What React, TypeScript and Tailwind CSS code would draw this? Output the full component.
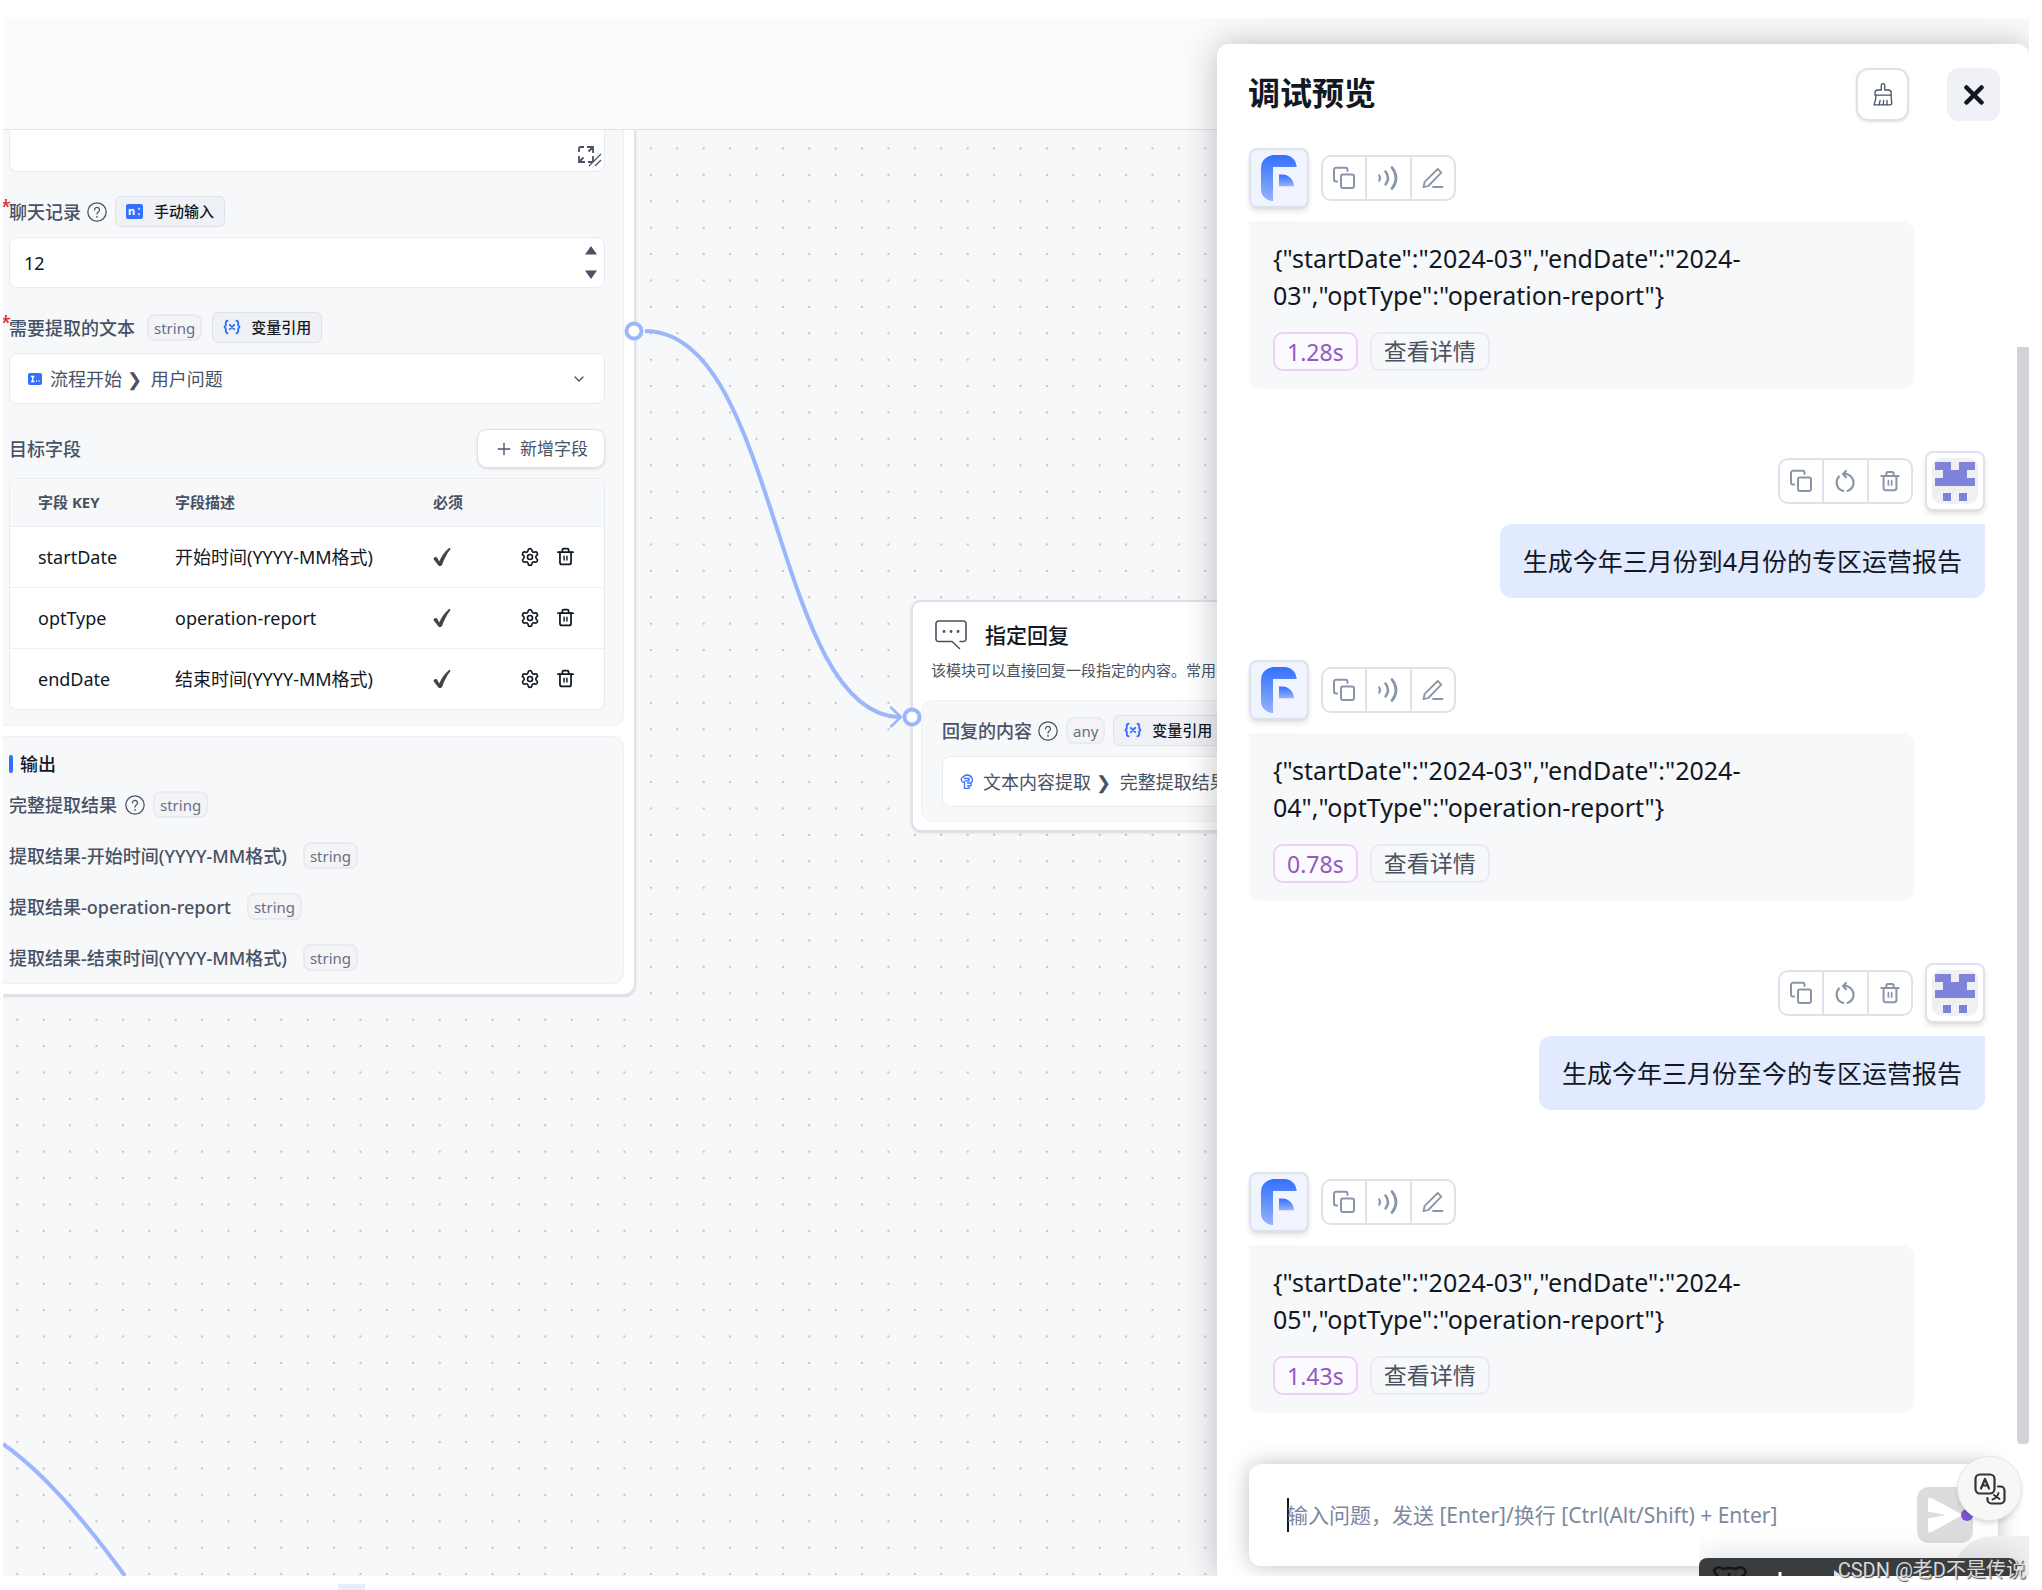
import type { ReactNode } from "react";
import { ChevronDown, Plus, Settings } from "lucide-react";

const fields = [
  { key: "startDate", desc: "开始时间(YYYY-MM格式)" },
  { key: "optType", desc: "operation-report" },
  { key: "endDate", desc: "结束时间(YYYY-MM格式)" },
];

const outputs = [
  { label: "完整提取结果", help: true },
  { label: "提取结果-开始时间(YYYY-MM格式)" },
  { label: "提取结果-operation-report" },
  { label: "提取结果-结束时间(YYYY-MM格式)" },
];

function CopyIcon() {
  return (
    <svg className="size-6" viewBox="0 0 24 24" fill="none" stroke="currentColor" strokeWidth="2" strokeLinecap="round">
      <rect x="9" y="8.5" width="13" height="13.5" rx="2" />
      <path d="M15.5 5V3.8a2 2 0 0 0-2-2H4a2 2 0 0 0-2 2v9.7a2 2 0 0 0 2 2h1.2" />
    </svg>
  );
}

function SoundIcon() {
  return (
    <svg className="h-6 w-5" viewBox="0 0 20 24" fill="none" stroke="currentColor" strokeLinecap="round">
      <path d="M1.2 9.5q1.6 2.5 0 5" strokeWidth="2.2" />
      <path d="M7.5 5.5q5 6.5 0 13" strokeWidth="2.5" />
      <path d="M14 1.5q8 10.5 0 21" strokeWidth="2.8" />
    </svg>
  );
}

function EditIcon() {
  return (
    <svg className="size-6" viewBox="0 0 24 24" fill="none" stroke="currentColor" strokeWidth="1.8" strokeLinejoin="round" strokeLinecap="round">
      <path d="M2.5 21.2l1-5L16.700 3l3.600 3.600L7.300 20z" />
      <path d="M12 21h9.500" />
    </svg>
  );
}

function RetryIcon() {
  return (
    <svg className="size-6" viewBox="0 0 24 24" fill="none" stroke="currentColor" strokeWidth="2.2" strokeLinecap="round" strokeLinejoin="round">
      <path d="M10.500 5a8.800 8.800 0 0 1 4.200 17" />
      <path d="M6 7.500a8.800 8.800 0 0 0 4.300 14.500" />
      <path d="M13 2l-3 3 3 3.200" />
    </svg>
  );
}

function TrashIcon({ className }: { className: string }) {
  return (
    <svg className={className} viewBox="0 0 24 24" fill="none" stroke="currentColor" strokeWidth="2.2" strokeLinecap="round" strokeLinejoin="round">
      <path d="M2.500 6.500h19" />
      <path d="M8 6V4a1.800 1.800 0 0 1 1.800-1.800h4.400A1.800 1.800 0 0 1 16 4v2" />
      <path d="M5 6.500v13A2.500 2.500 0 0 0 7.500 22h9a2.500 2.500 0 0 0 2.500-2.500v-13" />
      <path d="M10.200 11.500v5M13.800 11.500v5" strokeWidth="1.800" />
    </svg>
  );
}

function HelpIcon() {
  return (
    <svg className="size-5 shrink-0" viewBox="0 0 24 24" fill="none" stroke="currentColor" strokeWidth="1.500" strokeLinecap="round">
      <circle cx="12" cy="12" r="11" />
      <path d="M9 9.500a3 3 0 1 1 4.800 2.300c-1.100.8-1.800 1.300-1.800 2.600" />
      <path d="M12 17.800v.1" strokeWidth="2" />
    </svg>
  );
}

function CheckIcon() {
  return (
    <svg className="h-5 w-[18px]" viewBox="0 0 18 20" fill="#444">
      <path d="M.8 11c1.200-1.200 3-1.300 3.700.2l1.700 3.300C8.500 9.500 11.500 4.800 15.500 1.500c1.200-.9 2.300-.3 1.700.9C13.500 7 11 12.500 9.200 17.700c-.6 1.500-3.500 1.800-4.200.3L.8 12.500c-.4-.5-.4-1.100 0-1.500z" />
    </svg>
  );
}

function VariableIcon() {
  return (
    <svg className="h-4 w-[18px]" viewBox="0 0 18 16" fill="none" stroke="#3370ff" strokeWidth="1.900" strokeLinecap="round">
      <path d="M4.500 1.800Q2.800 2 2.800 4v2.200L1.600 8l1.200 1.800V12q0 2 1.700 2.200" />
      <path d="M13.500 1.800Q15.200 2 15.200 4v2.200L16.400 8l-1.200 1.800V12q0 2-1.700 2.200" />
      <path d="M6.800 5.800l4.400 4.400M11.200 5.800l-4.400 4.400" />
    </svg>
  );
}

function NumberIcon() {
  return (
    <svg className="h-[15px] w-[18px]" viewBox="0 0 18 15">
      <rect width="17" height="15" rx="2" fill="#3370ff" />
      <text x="2" y="11" fontSize="11" fontWeight="700" fill="#fff" fontFamily="Noto Sans">
        n
      </text>
      <path d="M11.500 5.500l1.500-2 1.500 2zM11.500 9.500l1.500 2 1.500-2z" fill="#fff" />
    </svg>
  );
}

function BroomIcon() {
  return (
    <svg className="h-[23px] w-5" viewBox="0 0 20 23" fill="none" stroke="currentColor" strokeWidth="1.300" strokeLinejoin="round" strokeLinecap="round">
      <path d="M8.300 7V2.300a1.700 1.700 0 0 1 3.400 0V7h3.500a3 3 0 0 1 3 3v2.200H2V10a3 3 0 0 1 3-3z" />
      <path d="M3 12.200C3 16 2.300 19 1 21.800h16c1.200 0 1.800-.8 1.700-2l-.7-7.600" />
      <path d="M6.300 21.500l.8-4M10.200 21.500l.5-4M14 21.500v-4" />
    </svg>
  );
}

function TypeTag({ children }: { children: string }) {
  return (
    <span className="flex h-[27px] items-center rounded-lg border-2 border-[#e8ebf0] bg-[#f4f4f7] px-[5px] text-[15px] leading-5 font-normal text-[#667085]">
      {children}
    </span>
  );
}

function ModeButton({ icon, children }: { icon: ReactNode; children: string }) {
  return (
    <button className="flex h-[31px] shrink-0 items-center gap-2.5 rounded-md border border-[#dfe2ea] bg-[#f0f1f6] px-2.5 pb-px text-[15px] leading-5 font-medium text-[#111824]">
      {icon}
      {children}
    </button>
  );
}

function ExtractNode() {
  return (
    <section className="absolute top-0 left-0 w-[633px] rounded-br-xl border-r-2 border-b-2 border-[#dfe2ea] bg-white pr-2.5 pb-2.5 text-[18px] leading-6 text-[#485264] shadow-sm">
      <div className="rounded-br-xl border-r border-b border-[#eff0f3] bg-[#f7f8fa] pr-[18px] pb-[15px] pl-1.5">
        <div className="relative">
          <textarea
            aria-label="提取要求描述"
            className="block h-[42px] w-full resize-none rounded-b-lg border border-t-0 border-[#e8ebf0] bg-white"
          />
          <svg className="absolute right-0.5 bottom-1 h-6 w-7" viewBox="0 0 28 24" fill="none" stroke="#485264" strokeWidth="1.800">
            <path d="M4 8V4.500Q4 3 5.500 3H9M12 3h6v6M18 3l-4.500 4.500M4 12v6h6M4 18l4.500-4.500M18 12v4.500q0 1.500-1.500 1.500H13" />
            <path d="M14 22L26 10M20 22l6-6" strokeWidth="1.200" />
          </svg>
        </div>

        <div className="relative mt-6 flex h-[31px] items-center font-medium">
          <span className="absolute -top-0.5 -left-2 text-[#d92d20]">*</span>
          <label htmlFor="history">聊天记录</label>
          <span className="mr-2 ml-1.5 flex">
            <HelpIcon />
          </span>
          <ModeButton icon={<NumberIcon />}>手动输入</ModeButton>
        </div>
        <div className="relative mt-2.5">
          <input
            id="history"
            inputMode="numeric"
            defaultValue="12"
            className="block h-[51px] w-full rounded-lg border border-[#e8ebf0] bg-white px-3.5 text-[#111824]"
          />
          <div className="absolute inset-y-2 right-2 flex flex-col justify-between">
            <button aria-label="增加">
              <svg className="h-2.5 w-3" viewBox="0 0 12 10" fill="#485264">
                <path d="M6 1l6 8.500H0z" />
              </svg>
            </button>
            <button aria-label="减少">
              <svg className="h-2.5 w-3" viewBox="0 0 12 10" fill="#485264">
                <path d="M6 9L0 .5h12z" />
              </svg>
            </button>
          </div>
        </div>

        <div className="relative mt-6 flex h-[31px] items-center font-medium">
          <span className="absolute -top-0.5 -left-2 text-[#d92d20]">*</span>
          <label htmlFor="source">需要提取的文本</label>
          <span className="mr-2.5 ml-3">
            <TypeTag>string</TypeTag>
          </span>
          <ModeButton icon={<VariableIcon />}>变量引用</ModeButton>
        </div>
        <div className="relative mt-2.5">
          <select
            id="source"
            className="block h-[51px] w-full appearance-none rounded-lg border border-[#e8ebf0] bg-white pl-10 text-[#485264]"
          >
            <option>流程开始&nbsp;❯&ensp;用户问题</option>
          </select>
          <svg className="pointer-events-none absolute top-5 left-[19px] h-3 w-3.5" viewBox="0 0 14 12">
            <rect width="14" height="12" rx="2" fill="#3370ff" />
            <path d="M3 3.500h3.400M3 8.500h3.400M4.700 3.500v5M8 8h1M10.500 8h1" stroke="#fff" strokeWidth="1.300" />
          </svg>
          <ChevronDown className="pointer-events-none absolute top-[18px] right-[18px] size-4" />
        </div>

        <div className="mt-[25px] flex h-[39px] items-center justify-between">
          <h3 className="font-medium">目标字段</h3>
          <button className="flex h-full items-center gap-1.5 rounded-[10px] border border-[#dfe2ea] bg-white px-4 text-[17px] shadow-sm">
            <Plus className="size-5" strokeWidth={1.6} />
            新增字段
          </button>
        </div>

        <div className="mt-2.5 overflow-hidden rounded-lg border border-[#e8ebf0] bg-white">
          <table className="w-full table-fixed text-left">
            <thead>
              <tr className="h-[47px] border-b border-[#eff0f5] bg-[#f7f8fa] text-[15px] leading-5">
                <th className="w-[137px] pl-7 font-bold">字段 KEY</th>
                <th className="w-[258px] pl-7 font-bold">字段描述</th>
                <th className="w-[87px] pl-7 font-bold">必须</th>
                <th aria-label="操作" />
              </tr>
            </thead>
            <tbody>
              {fields.map((f) => (
                <tr key={f.key} className="h-[61px] border-b border-[#eff0f5] text-[#111824] last:border-0">
                  <td className="pl-7">{f.key}</td>
                  <td className="pl-7 whitespace-nowrap">{f.desc}</td>
                  <td className="pl-7">
                    <CheckIcon />
                  </td>
                  <td className="pl-7">
                    <div className="flex items-center gap-4">
                      <button aria-label="设置">
                        <Settings className="size-5" />
                      </button>
                      <button aria-label="删除">
                        <TrashIcon className="size-[19px]" />
                      </button>
                    </div>
                  </td>
                </tr>
              ))}
            </tbody>
          </table>
        </div>
      </div>

      <div className="mt-2.5 rounded-r-xl border-t border-r border-b border-[#eff0f3] bg-[#f7f8fa] pt-3.5 pb-3 pl-1.5">
        <h3 className="flex h-[26px] items-center gap-[7px] font-medium text-[#111824]">
          <span className="h-[18px] w-1 rounded-xs bg-[#3370ff]" />
          输出
        </h3>
        <div className="mt-3.5 flex flex-col gap-6">
          {outputs.map((o) => (
            <div key={o.label} className="flex h-[27px] items-center font-medium">
              {o.label}
              {o.help ? (
                <span className="mx-2 flex">
                  <HelpIcon />
                </span>
              ) : (
                <span className="w-4" />
              )}
              <TypeTag>string</TypeTag>
            </div>
          ))}
        </div>
      </div>
    </section>
  );
}

function ReplyNode() {
  return (
    <section className="absolute top-[470px] left-[908px] w-[560px] rounded-[10px] border-2 border-[#dfe2ea] bg-white p-2 text-[18px] leading-6 whitespace-nowrap text-[#485264] shadow-sm">
      <h2 className="mt-[7px] ml-3.5 flex h-9 items-center gap-[18px] text-[21px] leading-7 font-medium text-[#111824]">
        <svg className="h-[30px] w-8" viewBox="0 0 32 30" fill="none" stroke="#485264" strokeWidth="1.600" strokeLinecap="round">
          <path d="M17 21.500H3.500a2.500 2.500 0 0 1-2.500-2.500V3.500A2.500 2.500 0 0 1 3.500 1h25A2.500 2.500 0 0 1 31 3.500V19a2.500 2.500 0 0 1-2.500 2.500H25M17 21.500l7.500 7" />
          <path d="M9 11.500h.1M16 11.500h.1M23 11.500h.1" strokeWidth="2.800" />
        </svg>
        指定回复
      </h2>
      <p className="mt-[5px] ml-2.5 text-[15px] leading-6">该模块可以直接回复一段指定的内容。常用于引导、提示。</p>
      <div className="mt-[18px] rounded-xl border border-[#eff0f3] bg-[#f7f8fa] px-5 py-3.5">
        <div className="flex h-[31px] items-center font-medium">
          回复的内容
          <span className="mr-2 ml-1.5 flex">
            <HelpIcon />
          </span>
          <span className="mr-2">
            <TypeTag>any</TypeTag>
          </span>
          <ModeButton icon={<VariableIcon />}>变量引用</ModeButton>
        </div>
        <div className="relative mt-2.5">
          <select
            aria-label="回复的内容"
            className="block h-[51px] w-full appearance-none rounded-lg border border-[#e8ebf0] bg-white pl-10 text-[#485264]"
          >
            <option>文本内容提取&nbsp;❯&ensp;完整提取结果</option>
          </select>
          <svg className="pointer-events-none absolute top-[18px] left-[18px] h-[15px] w-3.5" viewBox="0 0 14 15" fill="none" stroke="#3370ff" strokeWidth="1.300">
            <path d="M7 1C4 1 3.500 3 2.500 3.500S.8 5 1.500 6.500 3 8.500 4.500 8.500v5.800H9v-2.500M7 1c3 0 4 1 5 3s0 4-1 4.500M4 4.500h5v2.300H4.500M7 9h4v2.800H7" />
          </svg>
        </div>
      </div>
    </section>
  );
}

function Canvas() {
  return (
    <div className="relative flex-1 overflow-hidden bg-[#f7f8fa]">
      <svg className="absolute inset-0 size-full">
        <defs>
          <pattern id="dots" x="13.300" y="17.500" width="26.400" height="26.400" patternUnits="userSpaceOnUse">
            <circle cx="1" cy="1" r="1" fill="#adb1b8" />
          </pattern>
        </defs>
        <rect width="100%" height="100%" fill="url(#dots)" />
      </svg>
      <ExtractNode />
      <ReplyNode />
      <svg className="pointer-events-none absolute inset-0 size-full" fill="none" stroke="#9cb6fd" strokeWidth="4">
        <path d="M642 201C776 201 770 583 896 587" />
        <path d="M888 577.500l10 9.500-10 9.500" strokeWidth="2.500" strokeLinecap="round" />
        <path d="M0 1314Q53 1351 122 1446" />
        <circle cx="631" cy="201" r="7.500" fill="#fff" />
        <circle cx="909" cy="587" r="7.500" fill="#fff" />
      </svg>
    </div>
  );
}

function BotAvatar() {
  return (
    <span className="flex size-[60px] items-center justify-center rounded-lg border-2 border-[#dfe2ea] bg-[#f0f4ff] shadow-md">
      <svg className="h-[46px] w-9" viewBox="0 0 36 46">
        <defs>
          <linearGradient id="brand" x1="0" y1="0" x2="0" y2="1">
            <stop offset="0" stopColor="#3370ff" />
            <stop offset="1" stopColor="#94b2ff" />
          </linearGradient>
        </defs>
        <path d="M0 13A13 13 0 0 1 13 0h10.500A12 12 0 0 1 35.500 12H12v34A12 12 0 0 1 0 34z" fill="url(#brand)" />
        <path d="M18 19.500h3A12 12 0 0 1 33 31.300H18z" fill="url(#brand)" />
      </svg>
    </span>
  );
}

function UserAvatar() {
  return (
    <span className="flex size-[60px] items-center justify-center rounded-lg border-2 border-[#dfe2ea] bg-white shadow-md">
      <svg className="size-[46px]" viewBox="0 0 46 46">
        <rect width="46" height="46" rx="10" fill="#f0f0f0" />
        <path
          d="M3 4h16v8h8V4h16v8h-8v8h8v8H3v-8h8v-8H3zM11 35h8v8h-8zM27 35h8v8h-8z"
          fill="#7f81da"
        />
      </svg>
    </span>
  );
}

function Actions({ items }: { items: { label: string; icon: ReactNode }[] }) {
  return (
    <div className="flex h-[46px] w-[135px] divide-x-2 divide-[#dfe2ea] rounded-[10px] border-2 border-[#dfe2ea] bg-white text-[#8a95a7]">
      {items.map((i) => (
        <button key={i.label} aria-label={i.label} className="flex flex-1 items-center justify-center">
          {i.icon}
        </button>
      ))}
    </div>
  );
}

function BotMessage({ text, time }: { text: string; time: string }) {
  return (
    <article>
      <div className="flex items-center gap-3">
        <BotAvatar />
        <Actions
          items={[
            { label: "复制", icon: <CopyIcon /> },
            { label: "语音播报", icon: <SoundIcon /> },
            { label: "标注", icon: <EditIcon /> },
          ]}
        />
      </div>
      <div className="mt-[13px] w-[665px] rounded-tr-xl rounded-b-xl bg-[#f7f8fa] px-6 pt-[19px] pb-[18px]">
        <p className="w-[500px] text-[25px] leading-[37px] text-[#111824]">{text}</p>
        <div className="mt-[18px] flex gap-3 text-[23px] leading-7">
          <span className="flex h-[39px] items-center rounded-[10px] border-2 border-[#ecd0fb] bg-[#fbfaff] px-3 text-[#9558c0]">
            {time}
          </span>
          <button className="flex h-[39px] items-center rounded-[10px] border-2 border-[#e8ebf0] px-3 pb-px text-[#485264]">
            查看详情
          </button>
        </div>
      </div>
    </article>
  );
}

function UserMessage({ text }: { text: string }) {
  return (
    <article className="flex flex-col items-end">
      <div className="flex items-center gap-3">
        <Actions
          items={[
            { label: "复制", icon: <CopyIcon /> },
            { label: "重试", icon: <RetryIcon /> },
            { label: "删除", icon: <TrashIcon className="size-[22px]" /> },
          ]}
        />
        <UserAvatar />
      </div>
      <p className="mt-[13px] rounded-tl-xl rounded-b-xl bg-[#e1eaff] px-[23px] py-[18px] text-[25px] leading-[38px] text-[#111824]">
        {text}
      </p>
    </article>
  );
}

function ChatPanel() {
  return (
    <aside className="relative z-10 mt-[26px] flex w-[812px] shrink-0 flex-col rounded-t-xl bg-white shadow-[0_0_34px_rgba(31,35,41,0.28)]">
      <header className="flex items-center gap-[38px] pt-6 pr-[29px] pl-[31px]">
        <h1 className="flex-1 pb-1 text-[32px] leading-10 font-bold text-[#111824]">调试预览</h1>
        <button
          aria-label="清空记录"
          className="flex size-[53px] items-center justify-center rounded-xl border-2 border-[#dfe2ea] text-[#485264] shadow-sm"
        >
          <BroomIcon />
        </button>
        <button aria-label="关闭" className="flex size-[53px] items-center justify-center rounded-xl bg-[#f0f1f6]">
          <svg className="size-5" viewBox="0 0 20 20" stroke="#111824" strokeWidth="4.500" strokeLinecap="round">
            <path d="M2.500 2.500l15 15M17.500 2.500l-15 15" />
          </svg>
        </button>
      </header>

      <div className="relative flex flex-1 flex-col gap-[62px] pt-[27px] pr-11 pl-8">
        <BotMessage text={'{"startDate":"2024-03","endDate":"2024-03","optType":"operation-report"}'} time="1.28s" />
        <UserMessage text="生成今年三月份到4月份的专区运营报告" />
        <BotMessage text={'{"startDate":"2024-03","endDate":"2024-04","optType":"operation-report"}'} time="0.78s" />
        <UserMessage text="生成今年三月份至今的专区运营报告" />
        <BotMessage text={'{"startDate":"2024-03","endDate":"2024-05","optType":"operation-report"}'} time="1.43s" />
        <span className="absolute top-[226px] right-0 bottom-5 w-3 rounded-b-sm bg-[#d1d3d7]" />
      </div>

      <div className="relative mr-[31px] mb-2.5 ml-8 flex h-[102px] items-center rounded-xl bg-white pr-[25px] pl-[38px] shadow-[0_0_22px_rgba(0,0,0,0.25)]">
        <span className="-mr-0.5 h-[34px] w-0.5 bg-[#111824]" />
        <input
          aria-label="输入问题"
          placeholder="输入问题，发送 [Enter]/换行 [Ctrl(Alt/Shift) + Enter]"
          className="h-9 flex-1 text-[21px] placeholder:text-[#7b889d]"
        />
        <button aria-label="发送" className="flex size-14 items-center justify-center rounded-xl bg-[#dcdcdd]">
          <svg className="h-9 w-[34px]" viewBox="0 0 34 36" fill="#fff">
            <path d="M0 2.500C0 .8 1.500 0 3 .7L32 16.500c1.300.8 1.300 2.200 0 3L3 35.300C1.500 36 0 35.200 0 33.500V21.500L18 18 0 14.500z" />
          </svg>
        </button>
      </div>
    </aside>
  );
}

function FloatingTools() {
  return (
    <div className="pointer-events-none absolute right-0 bottom-0 z-20 h-[134px] w-[343px]">
      <div className="absolute top-7 right-[13px] bottom-3.5 left-0 overflow-hidden">
        <span className="absolute -right-9 bottom-0 h-10 w-28 rounded-tl-[40px] bg-[#f0f0f0]" />
        <div className="absolute bottom-0 left-0 h-[18px] w-[318px] rounded-t-lg bg-[#3a3d40] shadow-[0_0_28px_rgba(0,0,0,0.18)]">
          <svg className="h-[18px] w-full" viewBox="0 0 318 18" preserveAspectRatio="xMinYMin slice" fill="none">
            <path d="M19 18q-4-3-4-6 4-5 9-1 6-2 13 0 5-4 9 1 2 4-4 7M30 15v3" stroke="#151618" strokeWidth="2.500" />
            <path d="M81 14v4" stroke="#fff" strokeWidth="3" />
            <path d="M135 12l8 6h-8z" fill="#ddd" />
          </svg>
        </div>
      </div>
      <span className="absolute top-[53px] right-[69px] size-3 rounded-full bg-[#7a55d3]" />
      <button
        aria-label="翻译"
        className="absolute top-0 right-5 flex size-[65px] items-center justify-center rounded-full border border-[#e6e3f3] bg-[#f7f7f8] text-[#333] shadow-md"
      >
        <svg className="size-8" viewBox="0 0 32 32" fill="none" stroke="currentColor" strokeWidth="2.200" strokeLinecap="round" strokeLinejoin="round">
          <rect x="1.500" y="1.500" width="19" height="19" rx="4.500" />
          <path d="M7 15.500L11 6l4 9.500M8.500 12.500h5" />
          <path d="M24 13.500h2.500a4 4 0 0 1 4 4v9a4 4 0 0 1-4 4h-9a4 4 0 0 1-4-4V25" />
          <path d="M18.500 26.500q4.500-1.500 6-6.500M20 22l5.500 4" strokeWidth="1.900" />
        </svg>
      </button>
      <p className="absolute right-4 bottom-1 font-['Roboto','Noto_Sans_CJK_SC',sans-serif] text-[20px] leading-8 whitespace-nowrap text-[#d8d8d8] [text-shadow:1px_1px_1px_#444]">
        CSDN @老D不是传说
      </p>
    </div>
  );
}

export default function App() {
  return (
    <div className="relative flex min-h-screen flex-col overflow-hidden bg-white pt-[18px] pr-[13px] pb-3.5 pl-[3px] font-['Noto_Sans','Noto_Sans_CJK_SC',sans-serif]">
      <main className="flex flex-1 overflow-hidden bg-[#fbfbfc]">
        <div className="flex min-w-0 flex-1 flex-col">
          <div className="h-28 shrink-0 border-b border-[#dfe2ea]" />
          <Canvas />
        </div>
        <ChatPanel />
      </main>
      <FloatingTools />
      <span className="absolute bottom-0 left-[338px] h-1.5 w-[27px] bg-[#e6edfb]" />
    </div>
  );
}
